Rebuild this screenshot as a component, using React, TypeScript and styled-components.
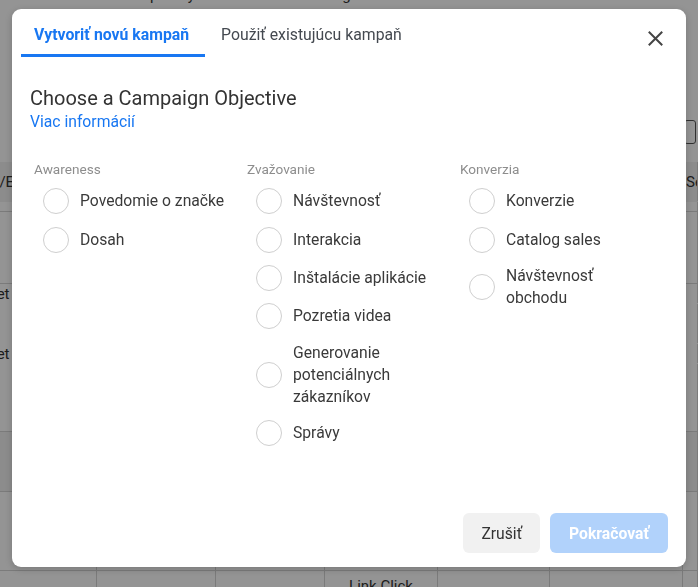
import styled, { createGlobalStyle } from "styled-components";

const GlobalStyle = createGlobalStyle`
  html, body {
    margin: 0;
    padding: 0;
    background: #ffffff;
    font-family: Roboto, "Liberation Sans", sans-serif;
    overflow: hidden;
  }
`;

// page that sits behind the dialog
const Page = styled.div`
  width: 698px;
  display: flex;
  flex-direction: column;
  color: #333;
  font-size: 15px;
`;

const TopLine = styled.div`
  margin-top: -14px;
  height: 20px;
  flex-shrink: 0;
  line-height: 18px;
  padding-left: 150px;
  letter-spacing: 1px;
  white-space: nowrap;
`;

const Toolbar = styled.div`
  height: 156px;
  flex-shrink: 0;
  display: flex;
  justify-content: flex-end;
  align-items: flex-start;
  padding: 114px 2px 0 0;
  box-sizing: border-box;
`;

const IconBox = styled.div`
  width: 10px;
  height: 22px;
  border: 1.5px solid #555;
  border-radius: 3px;
`;

const Table = styled.div`
  display: flex;
  flex-direction: column;
`;

const TableRow = styled.div<{ $h: number; $shade?: boolean; $line?: boolean }>`
  height: ${(p) => p.$h}px;
  flex-shrink: 0;
  display: grid;
  grid-template-columns: 97px 119px 109px 113px 112px 133px 15px;
  border-bottom: 1px solid ${(p) => (p.$line === false ? "transparent" : "#d4d4d4")};
  background: ${(p) => (p.$shade ? "#f2f2f2" : "#ffffff")};
  box-sizing: border-box;
`;

const Cell = styled.div<{ $indent?: number; $center?: boolean }>`
  display: flex;
  align-items: center;
  justify-content: ${(p) => (p.$center ? "center" : "flex-start")};
  border-right: 1px solid #d4d4d4;
  white-space: nowrap;
  overflow: hidden;
  text-indent: ${(p) => p.$indent ?? 0}px;
`;

// dialog
const Overlay = styled.div`
  position: fixed;
  inset: 0;
  background: rgba(0, 0, 0, 0.42);
  padding: 9px 0 0 12px;
`;

const Modal = styled.div`
  width: 674px;
  height: 558px;
  background: #ffffff;
  border-radius: 9px;
  display: flex;
  flex-direction: column;
  box-shadow: 0 2px 8px rgba(0, 0, 0, 0.2);
`;

const Header = styled.div`
  display: flex;
  align-items: flex-start;
  padding: 0 22px 0 9px;
`;

const Tabs = styled.div`
  display: flex;
  gap: 3px;
  flex: 1;
`;

const Tab = styled.div<{ $active?: boolean }>`
  padding: 17px 16px 10px 13px;
  line-height: 18px;
  font-size: 15.8px;
  font-weight: ${(p) => (p.$active ? 700 : 400)};
  color: ${(p) => (p.$active ? "#1877f2" : "#444950")};
  border-bottom: 3px solid ${(p) => (p.$active ? "#1877f2" : "transparent")};
`;

const CloseButton = styled.button`
  margin-top: 20px;
  width: 18px;
  height: 18px;
  padding: 0;
  border: none;
  background: none;
  display: flex;
  align-items: center;
  justify-content: center;
  cursor: pointer;
`;

const Body = styled.div`
  flex: 1;
  padding: 29px 18px 0;
`;

const Title = styled.h2`
  margin: 0;
  font-size: 20px;
  line-height: 24px;
  font-weight: 400;
  color: #333;
`;

const MoreLink = styled.a`
  display: block;
  margin-top: 3px;
  font-size: 15.7px;
  line-height: 18px;
  color: #1877f2;
  text-decoration: none;
`;

const Columns = styled.div`
  display: grid;
  grid-template-columns: repeat(3, 213px);
  margin: 30px 0 0 4px;
`;

const Column = styled.div`
  display: flex;
  flex-direction: column;
`;

const GroupLabel = styled.div`
  font-size: 13.6px;
  line-height: 16px;
  color: #8d8d8d;
  margin-bottom: 5px;
`;

const Option = styled.label`
  display: flex;
  align-items: center;
  min-height: 38.4px;
  box-sizing: border-box;
  padding: 6px 0 6px 9px;
  cursor: pointer;
`;

const Radio = styled.span`
  width: 24px;
  height: 24px;
  flex-shrink: 0;
  border: 1px solid #cfcfcf;
  border-radius: 50%;
  margin-right: 11px;
`;

const OptionText = styled.span`
  max-width: 148px;
  font-size: 15.7px;
  line-height: 22px;
  color: #3a3a3a;
`;

const Footer = styled.div`
  display: flex;
  justify-content: flex-end;
  gap: 10px;
  padding: 0 18px 14px;
`;

const Button = styled.button<{ $primary?: boolean }>`
  height: 40px;
  padding: 0 ${(p) => (p.$primary ? 19 : 18)}px;
  border: none;
  border-radius: 6px;
  font-family: Roboto, "Liberation Sans", sans-serif;
  font-size: 15.7px;
  font-weight: ${(p) => (p.$primary ? 700 : 400)};
  background: ${(p) => (p.$primary ? "#b1d2fb" : "#f1f1f1")};
  color: ${(p) => (p.$primary ? "#ffffff" : "#333333")};
  cursor: pointer;
`;

const groups = [
  { title: "Awareness", items: ["Povedomie o značke", "Dosah"] },
  {
    title: "Zvažovanie",
    items: [
      "Návštevnosť",
      "Interakcia",
      "Inštalácie aplikácie",
      "Pozretia videa",
      "Generovanie potenciálnych zákazníkov",
      "Správy",
    ],
  },
  {
    title: "Konverzia",
    items: ["Konverzie", "Catalog sales", "Návštevnosť obchodu"],
  },
];

type BgRow = {
  h: number;
  shade?: boolean;
  line?: boolean;
  first?: string;
  last?: string;
  indent?: number;
};

const rows: BgRow[] = [
  { h: 40, shade: true, line: false, first: "Ad Set Name/E", last: "Se", indent: -88 },
  { h: 10 },
  { h: 72 },
  { h: 20, line: false, first: "Target", indent: -33 },
  { h: 40, line: false },
  { h: 20, line: false, first: "Target", indent: -33 },
  { h: 68 },
  { h: 60, shade: true },
  { h: 79 },
];

export default function App() {
  return (
    <>
      <GlobalStyle />
      <Page>
        <TopLine>p&nbsp;&nbsp;&nbsp;&nbsp;&nbsp;&nbsp;y&nbsp;&nbsp;&nbsp;&nbsp;&nbsp;&nbsp;&nbsp;&nbsp;&nbsp;&nbsp;&nbsp;&nbsp;&nbsp;&nbsp;&nbsp;&nbsp;&nbsp;&nbsp;&nbsp;&nbsp;&nbsp;&nbsp;&nbsp;&nbsp;&nbsp;&nbsp;&nbsp;&nbsp;&nbsp;&nbsp;&nbsp;g</TopLine>
        <Toolbar>
          <IconBox />
        </Toolbar>
        <Table>
          {rows.map((r, i) => (
            <TableRow key={i} $h={r.h} $shade={r.shade} $line={r.line}>
              <Cell $indent={r.indent}>{r.first}</Cell>
              <Cell />
              <Cell />
              <Cell />
              <Cell />
              <Cell />
              <Cell $indent={3}>{r.last}</Cell>
            </TableRow>
          ))}
          <TableRow $h={30}>
            <Cell />
            <Cell />
            <Cell />
            <Cell $center>Link Click</Cell>
            <Cell />
            <Cell />
            <Cell />
          </TableRow>
        </Table>
      </Page>

      <Overlay>
        <Modal>
          <Header>
            <Tabs>
              <Tab $active>Vytvoriť novú kampaň</Tab>
              <Tab>Použiť existujúcu kampaň</Tab>
            </Tabs>
            <CloseButton aria-label="Zavrieť">
              <svg width="15" height="15" viewBox="0 0 15 15">
                <path
                  d="M1.5 1.5L13.5 13.5M13.5 1.5L1.5 13.5"
                  stroke="#444"
                  strokeWidth="2"
                  strokeLinecap="square"
                />
              </svg>
            </CloseButton>
          </Header>
          <Body>
            <Title>Choose a Campaign Objective</Title>
            <MoreLink href="#">Viac informácií</MoreLink>
            <Columns>
              {groups.map((g) => (
                <Column key={g.title}>
                  <GroupLabel>{g.title}</GroupLabel>
                  {g.items.map((item) => (
                    <Option key={item}>
                      <Radio />
                      <OptionText>{item}</OptionText>
                    </Option>
                  ))}
                </Column>
              ))}
            </Columns>
          </Body>
          <Footer>
            <Button>Zrušiť</Button>
            <Button $primary>Pokračovať</Button>
          </Footer>
        </Modal>
      </Overlay>
    </>
  );
}
